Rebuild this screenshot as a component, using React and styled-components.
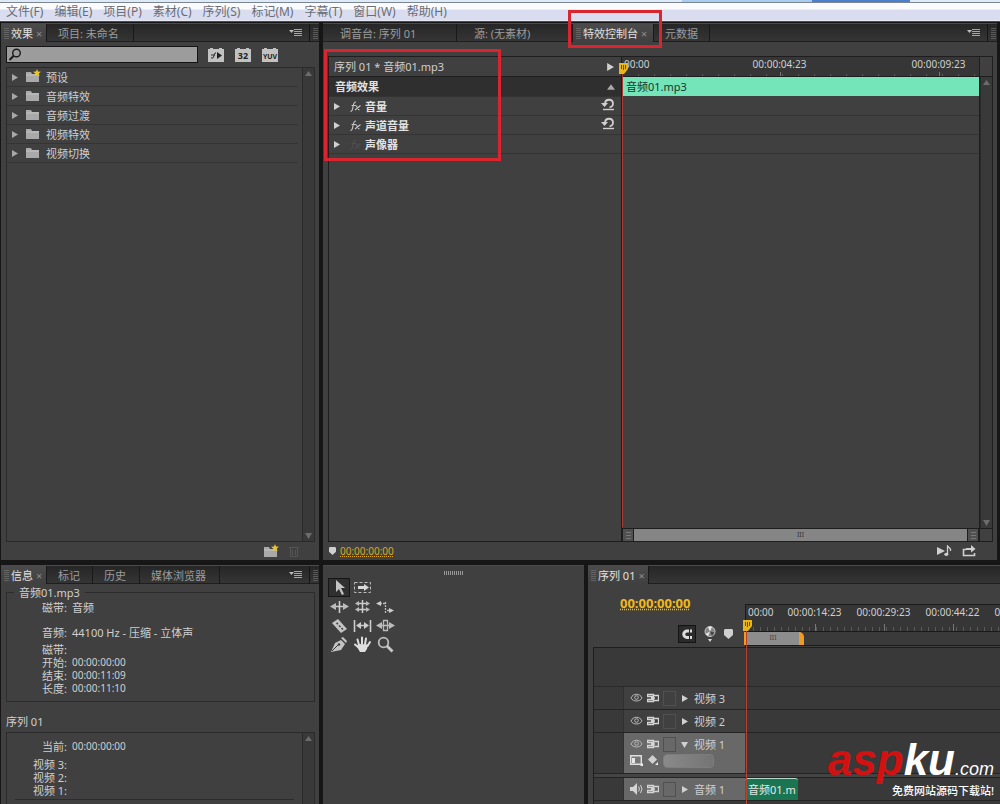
import React, { useState } from 'react';
import styled, { createGlobalStyle, css } from 'styled-components';

const menus = ['文件(F)', '编辑(E)', '项目(P)', '素材(C)', '序列(S)', '标记(M)', '字幕(T)', '窗口(W)', '帮助(H)'];
const folders = ['预设', '音频特效', '音频过渡', '视频特效', '视频切换'];
const effects = [
  { name: '音量', fx: true },
  { name: '声道音量', fx: true },
  { name: '声像器', fx: false },
];
const videoTracks = [{ name: '视频 3' }, { name: '视频 2' }, { name: '视频 1', open: true }];

/* Icons */

const Triangle = ({ dir = 'right', size = 7, color = '#a8a8a8' }) => {
  const points = { right: '1,0 7,3.5 1,7', down: '0,1 7,1 3.5,7', up: '0,6 7,6 3.5,1' };
  return (
    <Svg width={size} height={size} viewBox='0 0 7 7'>
      <polygon points={points[dir]} fill={color} />
    </Svg>
  );
};

const FolderIcon = ({ star }) => (
  <Svg width='16' height='14' viewBox='0 0 16 14'>
    <path d='M1 3h5l1 2h7v8H1z' fill='#a9a9a9' />
    <path d='M1 6h13' stroke='#c4c4c4' />
    {star && <path d='M12 0l1 2.5 3 .3-2.2 1.8.7 2.7L12 5.900l-2.500 1.400.7-2.700L8 2.800l3-.3z' fill='#e9c52b' />}
  </Svg>
);

const MenuIcon = () => (
  <Svg width='14' height='9' viewBox='0 0 14 9'>
    <path d='M0 2h5L2.500 5z' fill='#bdbdbd' />
    <path d='M5 1.500h8M5 3.500h8M5 5.500h8M5 7.500h8' stroke='#a5a5a5' />
  </Svg>
);

const BadgeIcon = ({ kind }) => (
  <Svg width='18' height='14' viewBox='0 0 18 14'>
    <path d='M1 1h2V0h3v1h6V0h3v1h2v13H1z' fill='#c2c2c2' />
    {kind === 'play' ? (
      <>
        <path d='M4 10h2l2-5h1M4 7h4' stroke='#333' fill='none' />
        <polygon points='10,4 15,7.500 10,11' fill='#222' />
      </>
    ) : (
      <BadgeText x='9' y='11' $small={kind === 'YUV'}>
        {kind}
      </BadgeText>
    )}
  </Svg>
);

const SearchIcon = () => (
  <Svg width='14' height='14' viewBox='0 0 14 14' fill='none' stroke='#1c1c1c'>
    <circle cx='8.500' cy='5' r='3.800' strokeWidth='1.400' />
    <path d='M5.700 7.800L1.500 12' strokeWidth='2' />
  </Svg>
);

const FxIcon = ({ dim }) => (
  <Svg width='11' height='11' viewBox='0 0 11 11' fill='none' stroke={dim ? '#4e4e4e' : '#c6c6c6'} strokeWidth='1.100'>
    <path d='M.5 10.500c2 0 2-2 2.500-5s1-4.500 3-4.500M1.500 4.500h4M5.500 4.500c2 0 2 4.500 4 4.500M10.500 4.500L5 9' />
  </Svg>
);

const ResetIcon = () => (
  <Svg width='14' height='13' viewBox='0 0 14 13' fill='none' stroke='#d0d0d0'>
    <path d='M4 5a4 3.800 0 1 1 4.500 4.300' strokeWidth='1.800' />
    <polygon points='0,5 7,5 3.500,9' fill='#d0d0d0' stroke='none' />
    <path d='M2 11.500h11' strokeWidth='1.400' />
  </Svg>
);

const PlayheadIcon = () => (
  <Svg width='9' height='12' viewBox='0 0 9 12'>
    <path d='M0 0h9v6l-4 5H0z' fill='#e9b51f' />
    <path d='M2.500 2v4M4.500 2v5M6.500 2v4' stroke='#6b4d05' />
  </Svg>
);

const MarkerIcon = ({ large }) => (
  <Svg width={large ? 9 : 7} height={large ? 10 : 8} viewBox='0 0 9 10'>
    <path d='M1 0h7l1 1v5L4.500 10 0 6V1z' fill='#cfcfcf' />
  </Svg>
);

const TrashIcon = () => (
  <Svg width='10' height='11' viewBox='0 0 10 11' stroke='#545454' fill='none'>
    <path d='M0 1.500h10M1.500 2v8.500h7V2M3.500 4v5M6.500 4v5' />
  </Svg>
);

const PlayAudioIcon = () => (
  <Svg width='15' height='12' viewBox='0 0 15 12'>
    <polygon points='0,2 8,6 0,10' fill='#cfcfcf' />
    <path d='M10.500 9V1l3 3v2' stroke='#cfcfcf' strokeWidth='1.300' fill='none' />
    <ellipse cx='9.300' cy='9.300' rx='2' ry='1.600' fill='#cfcfcf' />
  </Svg>
);

const ExportIcon = () => (
  <Svg width='15' height='12' viewBox='0 0 15 12'>
    <path d='M4 4.500H1.500v6h11V8' stroke='#cfcfcf' strokeWidth='1.600' fill='none' />
    <path d='M4 5V3h5V0l4.500 4L9 7.500V5z' fill='#cfcfcf' />
  </Svg>
);

const EyeIcon = () => (
  <Svg width='13' height='10' viewBox='0 0 13 10' fill='none' stroke='#b9b9b9'>
    <path d='M1 5c2-5 9-5 11 0-2 4-9 4-11 0z' />
    <circle cx='6.500' cy='4.500' r='1.800' />
  </Svg>
);

const SyncIcon = () => (
  <Svg width='12' height='10' viewBox='0 0 12 10' fill='none' stroke='#d4d4d4'>
    <path d='M.5 1.500h6v2h-6zM.5 6.500h6v2h-6zM7 2.500h4.500v5H7M8 5h-4' strokeWidth='1.300' />
  </Svg>
);

const SpeakerIcon = () => (
  <Svg width='13' height='12' viewBox='0 0 13 12'>
    <path d='M0 4h3l4-4v12L3 8H0z' fill='#d4d4d4' />
    <path d='M8.500 3.500q2 2.500 0 5M10.500 2q3 4 0 8' stroke='#d4d4d4' fill='none' />
  </Svg>
);

const DisplayIcon = () => (
  <Svg width='14' height='12' viewBox='0 0 14 12'>
    <path d='M.7.7h10.600v8.600H.7z' stroke='#e0e0e0' strokeWidth='1.400' fill='#777' />
    <path d='M2 3h3v5H2z' fill='#e8e8e8' />
    <path d='M13 8v3h-3z' fill='#eee' />
  </Svg>
);

const KeyframeIcon = () => (
  <Svg width='11' height='12' viewBox='0 0 11 12'>
    <path d='M4.500 0L9 4.500 4.500 9 0 4.500z' fill='#cfcfcf' />
    <path d='M10 7v3H7z' fill='#eee' />
  </Svg>
);

const MagnetIcon = () => (
  <Svg width='14' height='14' viewBox='0 0 14 14' fill='none' stroke='#dcdcdc'>
    <path d='M12 4H7a3 3 0 0 0 0 6.500h5' strokeWidth='3' />
    <path d='M9.500 2v4M9.500 9v3' stroke='#222' />
  </Svg>
);

const EncoreIcon = () => (
  <Svg width='12' height='16' viewBox='0 0 12 16'>
    <circle cx='6' cy='5.500' r='5' fill='#858585' stroke='#c9c9c9' />
    <path d='M6 5.500L4 1l4-.3zM6 5.500l-2 4.700L1.500 8z' fill='#eee' />
    <path d='M6 5.500l4.500 1L8 10z' fill='#444' />
    <path d='M4 13h4l-2 3z' fill='#d6d6d6' />
  </Svg>
);

// One entry for each button of the tool palette, null leaves the cell empty
const tools = [
  { name: '选择工具', art: <path d='M6 2v12l3-3 3 6 2-1-3-6h4z' fill='#c4c4c4' /> },
  {
    name: '轨道选择工具',
    art: (
      <>
        <path d='M1.500 4.500h16v10h-16z' fill='none' stroke='#bbb' strokeDasharray='3 2' />
        <path d='M5 8h6V6l5 3.500-5 3.500v-2H5z' fill='#d8d8d8' />
      </>
    ),
  },
  null,
  {
    name: '波纹编辑工具',
    art: (
      <>
        <path d='M9.500 4v12M4 9.500h11' stroke='#ccc' strokeWidth='1.600' />
        <path d='M0 9.500L6 6v7zM19 9.500L13 6v7z' fill='#bbb' />
      </>
    ),
  },
  {
    name: '滚动编辑工具',
    art: (
      <>
        <path d='M9.500 3v13M4 6.500h11M4 12.500h11' stroke='#ccc' strokeWidth='1.500' />
        <path d='M2 6.500L6 4v5zM17 6.500L13 4v5zM2 12.500L6 10v5zM17 12.500L13 10v5z' fill='#bbb' />
      </>
    ),
  },
  {
    name: '速率伸缩工具',
    art: (
      <>
        <path d='M4 6.500h5M9.500 5v11M11 13.500h5' stroke='#bbb' strokeDasharray='2 1' strokeWidth='1.300' />
        <path d='M0 6.500L5 4v5zM18 13.500L13 11v5z' fill='#ccc' />
      </>
    ),
  },
  {
    name: '剃刀工具',
    art: (
      <>
        <path d='M2 7l6-4 9 10-6 4z' fill='#c4c4c4' />
        <path d='M6.500 7l1.500 1M9 9.500l1.500 1.500M11.500 12l1.500 1.500' stroke='#444' strokeWidth='1.600' />
      </>
    ),
  },
  {
    name: '错落工具',
    art: (
      <>
        <path d='M1.500 4v12M17.500 4v12M6 9.500h7' stroke='#ccc' strokeWidth='1.600' />
        <path d='M3 9.500L8 6v7zM16 9.500L11 6v7z' fill='#ccc' />
      </>
    ),
  },
  {
    name: '滑动工具',
    art: (
      <>
        <path d='M7.500 4.500h4v10h-4zM3 9.500h13' fill='none' stroke='#bbb' strokeWidth='1.300' />
        <path d='M0 9.500L6 6v7zM19 9.500L13 6v7z' fill='#bbb' />
      </>
    ),
  },
  {
    name: '钢笔工具',
    art: (
      <>
        <path d='M1 17L5 8l6-3 4 4-4 6z' fill='#c4c4c4' />
        <path d='M11 3l2-1 4 4-1 2z' fill='#c4c4c4' />
        <path d='M2 16l6-6' stroke='#3a3a3a' />
        <circle cx='9' cy='9.500' r='1.200' fill='#3a3a3a' />
      </>
    ),
  },
  {
    name: '手形工具',
    art: (
      <>
        <path d='M6 10L4.500 4.500M9 9V2.500M12 9.500l1-6M14.500 11l2.500-4M5 12L2 9.500' stroke='#dedede' strokeWidth='2' strokeLinecap='round' />
        <path d='M5 9l10 .5-1 4.500-2 3H7l-3-5z' fill='#dedede' />
      </>
    ),
  },
  {
    name: '缩放工具',
    art: (
      <>
        <circle cx='7.500' cy='7.500' r='4.800' fill='none' stroke='#bcbcbc' strokeWidth='1.800' />
        <path d='M11 11l5.500 5.500' stroke='#c8c8c8' strokeWidth='2.800' />
      </>
    ),
  },
];

/* Shared parts */

const PanelTab = ({ label, active, width, indent = 11 }) => (
  <Tab $active={active} $width={width}>
    {active && <Grip />}
    <TabButton $active={active} $indent={active ? 2 : indent}>
      {label}
    </TabButton>
    {active && <CloseButton aria-label='关闭'>×</CloseButton>}
  </Tab>
);

const PanelMenu = () => (
  <>
    <PanelMenuButton aria-label='面板菜单'>
      <MenuIcon />
    </PanelMenuButton>
    <TabEnd>
      <Grip />
    </TabEnd>
  </>
);

const ScrollBar = () => (
  <ScrollColumn>
    <Triangle dir='up' color='#6c6c6c' />
    <Triangle dir='down' color='#6c6c6c' />
  </ScrollColumn>
);

const TrackRow = ({ name, open, audio, children }) => (
  <Track $tall={open} $audio={audio}>
    <TrackGutter />
    <TrackHead $lit={open || audio}>
      <TrackControls>
        <TrackSwitch aria-label='切换轨道输出'>{audio ? <SpeakerIcon /> : <EyeIcon />}</TrackSwitch>
        <TrackSwitch aria-label='同步锁定'>
          <SyncIcon />
        </TrackSwitch>
        <TrackSwitch aria-label='锁定轨道' $boxed />
        <TrackName>
          <Triangle dir={open ? 'down' : 'right'} color='#d0d0d0' />
          {name}
        </TrackName>
      </TrackControls>
      {open && (
        <TrackOptions>
          <DisplayIcon />
          <KeyframeIcon />
          <KeyframeNav />
        </TrackOptions>
      )}
    </TrackHead>
    <TrackLane>{children}</TrackLane>
  </Track>
);

const App = () => {
  const [search, setSearch] = useState('');
  const [tool, setTool] = useState(0);

  return (
    <Shell>
      <GlobalStyle />
      <MenuBar>
        {menus.map((item) => (
          <MenuItem key={item}>{item}</MenuItem>
        ))}
      </MenuBar>

      <Workspace>
        <TopRow>
          {/* Effects browser */}
          <Panel>
            <TabBar>
              <PanelTab label='效果' active width={46} />
              <PanelTab label='项目: 未命名' width={87} />
              <PanelMenu />
            </TabBar>
            <SearchRow>
              <SearchBox>
                <SearchIcon />
                <input aria-label='搜索效果' value={search} onChange={(e) => setSearch(e.target.value)} />
              </SearchBox>
              {['play', '32', 'YUV'].map((kind) => (
                <IconButton key={kind} aria-label={kind}>
                  <BadgeIcon kind={kind} />
                </IconButton>
              ))}
            </SearchRow>
            <TreeBox>
              <TreeList>
                {folders.map((name, index) => (
                  <TreeRow key={name}>
                    <Triangle />
                    <FolderIcon star={index === 0} />
                    {name}
                  </TreeRow>
                ))}
              </TreeList>
              <ScrollBar />
            </TreeBox>
            <PanelFooter $end={20}>
              <IconButton aria-label='新建文件夹'>
                <FolderIcon star />
              </IconButton>
              <IconButton aria-label='删除'>
                <TrashIcon />
              </IconButton>
            </PanelFooter>
          </Panel>

          {/* Effect controls */}
          <Panel>
            <TabBar>
              <PanelTab label='调音台: 序列 01' width={134} indent={17} />
              <PanelTab label='源: (无素材)' width={116} indent={17} />
              <PanelTab label='特效控制台' active width={81} />
              <PanelTab label='元数据' width={56} />
              <PanelMenu />
              <TabOutline />
            </TabBar>
            <ControlsBox>
              <EffectList>
                <EffectTitle>
                  序列 01 * 音频01.mp3
                  <Triangle color='#d0d0d0' size={8} />
                </EffectTitle>
                <EffectGroup>
                  音频效果
                  <Triangle dir='up' size={8} />
                </EffectGroup>
                {effects.map((item) => (
                  <EffectRow key={item.name}>
                    <Triangle color='#d0d0d0' />
                    <FxIcon dim={!item.fx} />
                    <span>{item.name}</span>
                    {item.fx && (
                      <IconButton aria-label='重置'>
                        <ResetIcon />
                      </IconButton>
                    )}
                  </EffectRow>
                ))}
              </EffectList>
              <EffectTimeline>
                <EffectRuler>
                  <span>00:00</span>
                  <span>00:00:04:23</span>
                  <span>00:00:09:23</span>
                </EffectRuler>
                <EffectClip>音频01.mp3</EffectClip>
                {effects.map((item) => (
                  <EffectLane key={item.name} />
                ))}
                <EffectPlayhead>
                  <PlayheadIcon />
                </EffectPlayhead>
                <ZoomBar>
                  <ZoomHandle />
                  <ZoomThumb>III</ZoomThumb>
                  <ZoomHandle />
                </ZoomBar>
              </EffectTimeline>
              <EffectScroll>
                <ScrollBar />
              </EffectScroll>
              <ListOutline />
            </ControlsBox>
            <PanelFooter $start={6} $end={20}>
              <MarkerIcon />
              <Timecode>00:00:00:00</Timecode>
              <IconButton aria-label='仅播放音频'>
                <PlayAudioIcon />
              </IconButton>
              <IconButton aria-label='导出'>
                <ExportIcon />
              </IconButton>
            </PanelFooter>
          </Panel>
        </TopRow>

        <BottomRow>
          {/* Clip info */}
          <Panel>
            <TabBar>
              <PanelTab label='信息' active width={46} />
              <PanelTab label='标记' width={46} />
              <PanelTab label='历史' width={47} />
              <PanelTab label='媒体浏览器' width={80} />
              <PanelMenu />
            </TabBar>
            <ClipInfo>
              <legend>音频01.mp3</legend>
              <InfoList>
                <dt>磁带:</dt>
                <dd>音频</dd>
              </InfoList>
              <InfoList>
                <dt>音频:</dt>
                <dd>44100 Hz - 压缩 - 立体声</dd>
              </InfoList>
              <InfoList>
                <dt>磁带:</dt>
                <dd />
                <dt>开始:</dt>
                <Time>00:00:00:00</Time>
                <dt>结束:</dt>
                <Time>00:00:11:09</Time>
                <dt>长度:</dt>
                <Time>00:00:11:10</Time>
              </InfoList>
            </ClipInfo>
            <SequenceName>序列 01</SequenceName>
            <SequenceInfo>
              <SequenceList>
                <InfoList>
                  <dt>当前:</dt>
                  <Time>00:00:00:00</Time>
                </InfoList>
                <InfoList>
                  <dt>视频 3:</dt>
                  <dd />
                  <dt>视频 2:</dt>
                  <dd />
                  <dt>视频 1:</dt>
                  <dd />
                </InfoList>
              </SequenceList>
              <SequenceScroll>
                <Triangle dir='up' color='#6c6c6c' />
              </SequenceScroll>
            </SequenceInfo>
          </Panel>

          {/* Tool palette */}
          <Panel>
            <ToolGrip />
            <ToolGrid>
              {tools.map((item, index) =>
                item ? (
                  <ToolButton key={item.name} aria-label={item.name} $active={tool === index} onClick={() => setTool(index)}>
                    <Svg width='19' height='19' viewBox='0 0 19 19'>
                      {item.art}
                    </Svg>
                  </ToolButton>
                ) : (
                  <span key={index} />
                )
              )}
            </ToolGrid>
          </Panel>

          {/* Sequence timeline */}
          <Panel>
            <TabBar>
              <PanelTab label='序列 01' active width={61} />
            </TabBar>
            <TimelineHead>
              <TimelineTools>
                <BigTimecode>00:00:00:00</BigTimecode>
                <TimelineButtons>
                  <SnapButton aria-label='吸附'>
                    <MagnetIcon />
                  </SnapButton>
                  <IconButton aria-label='Encore 章节标记'>
                    <EncoreIcon />
                  </IconButton>
                  <IconButton aria-label='标记'>
                    <MarkerIcon large />
                  </IconButton>
                </TimelineButtons>
              </TimelineTools>
              <TimelineRuler>
                <RulerLabels>
                  <span>00:00</span>
                  <span>00:00:14:23</span>
                  <span>00:00:29:23</span>
                  <span>00:00:44:22</span>
                  <span>00:00:59:22</span>
                </RulerLabels>
                <WorkBar>
                  <WorkArea>III</WorkArea>
                </WorkBar>
                <TimelinePlayhead>
                  <PlayheadIcon />
                </TimelinePlayhead>
              </TimelineRuler>
            </TimelineHead>
            <Tracks>
              <TrackSpace />
              {videoTracks.map((track) => (
                <TrackRow key={track.name} {...track} />
              ))}
              <TrackSplit />
              <TrackRow name='音频 1' audio>
                <AudioClip>音频01.m</AudioClip>
              </TrackRow>
            </Tracks>
          </Panel>
        </BottomRow>
      </Workspace>

      <Watermark>
        <Brand>
          <b>asp</b>
          <strong>ku</strong>
          <em>.com</em>
        </Brand>
        <Slogan>免费网站源码下载站!</Slogan>
      </Watermark>
    </Shell>
  );
};

const GlobalStyle = createGlobalStyle`
  * {
    box-sizing: border-box;
  }

  body {
    margin: 0;
    background: #161616;
    color: #cfcfcf;
    font: 11px/13px 'Noto Sans', 'Noto Sans CJK SC', sans-serif;
  }

  button {
    padding: 0;
    border: 0;
    background: none;
    color: inherit;
    font: inherit;
    white-space: nowrap;
  }
`;

const Svg = styled.svg`
  display: block;
  flex: none;
`;

const BadgeText = styled.text`
  fill: #222;
  font: bold 9px 'Noto Sans', sans-serif;
  font-size: ${({ $small }) => ($small ? '7px' : '9px')};
  text-anchor: middle;
`;

const Shell = styled.div`
  position: relative;
  display: flex;
  flex-direction: column;
  height: 100vh;
  overflow: hidden;
`;

/* Menu bar */

const MenuBar = styled.nav`
  display: flex;
  flex: none;
  gap: 11px;
  height: 22px;
  padding: 3px 6px 0;
  border-bottom: 1px solid #4a4d55;
  background:
    linear-gradient(#a9cdf0, #a9cdf0) 682px 0 / 130px 2px no-repeat,
    linear-gradient(#4a7fd0, #4a7fd0) 812px 0 / 98px 2px no-repeat,
    linear-gradient(#dcebf7 0 2px, #7d8590 2px 3px, #fafbfd 3px 9px, #d9ddef 10px 20px, #f4f5fa 21px);
  color: #6a6d76;
  font-size: 12px;
  line-height: 18px;
`;

const MenuItem = styled.button`
  display: block;
`;

/* Panels */

const Workspace = styled.main`
  display: flex;
  flex-direction: column;
  flex: 1;
  gap: 5px;
  min-height: 0;
  padding: 1px 0 0 1px;
`;

const TopRow = styled.div`
  display: grid;
  grid-template-columns: 318px minmax(0, 1fr);
  flex: 1;
  gap: 4px;
  min-height: 0;
  padding-right: 3px;
`;

const BottomRow = styled.div`
  display: grid;
  grid-template-columns: 318px 261px minmax(0, 1fr);
  flex: 0 0 239px;
  column-gap: 4px;
  min-height: 0;
`;

const Panel = styled.section`
  display: flex;
  flex-direction: column;
  min-width: 0;
  min-height: 0;
  background: #404040;
  border-top: 1px solid #4a4a4a;
`;

const TabBar = styled.div`
  position: relative;
  display: flex;
  flex: none;
  height: 18px;
  background: linear-gradient(#262626, #363636);
  box-shadow: inset 0 -1px #1e1e1e;
`;

const Tab = styled.div`
  display: flex;
  align-items: center;
  flex: none;
  width: ${({ $width }) => $width}px;
  border-right: 1px solid #191919;
  overflow: hidden;
  ${({ $active }) =>
    $active &&
    css`
      padding-left: 3px;
      background: linear-gradient(#4b4b4b, #404040);
    `}
`;

const TabButton = styled.button`
  padding-left: ${({ $indent }) => $indent}px;
  color: ${({ $active }) => ($active ? '#e0e0e0' : '#9c9c9c')};
`;

const CloseButton = styled.button`
  padding-left: 3px;
  color: #8d8d8d;
`;

const Grip = styled.i`
  flex: none;
  width: 5px;
  height: 11px;
  background: repeating-linear-gradient(#777 0 1px, transparent 1px 2px);
  opacity: 0.6;
`;

const PanelMenuButton = styled.button`
  margin: 0 6px 2px auto;
`;

const TabEnd = styled.div`
  display: flex;
  align-items: center;
  width: 10px;
  padding-left: 3px;
  border-left: 1px solid #151515;
`;

const IconButton = styled.button`
  flex: none;
`;

const PanelFooter = styled.footer`
  display: flex;
  align-items: center;
  justify-content: flex-end;
  flex: none;
  gap: 10px;
  height: 18px;
  padding: 0 ${({ $end }) => $end}px 0 ${({ $start = 0 }) => $start}px;
`;

const ScrollColumn = styled.div`
  display: flex;
  flex-direction: column;
  align-items: center;
  justify-content: space-between;
  flex: none;
  width: 12px;
  padding: 2px 0;
  border-left: 1px solid #2a2a2a;
  background: #393939;
`;

/* Effects browser */

const SearchRow = styled.div`
  display: flex;
  align-items: center;
  flex: none;
  gap: 9px;
  height: 25px;
  padding-left: 5px;
`;

const SearchBox = styled.label`
  display: flex;
  align-items: center;
  width: 192px;
  height: 17px;
  padding-left: 1px;
  border: 1px solid #141414;
  background: #9c9c9c;

  input {
    flex: 1;
    min-width: 0;
    padding: 0 2px;
    border: 0;
    outline: 0;
    background: transparent;
    font: inherit;
  }
`;

const TreeBox = styled.div`
  display: flex;
  flex: 1;
  min-height: 0;
  margin: 0 4px 0 5px;
  border: 1px solid #2a2a2a;
`;

const TreeList = styled.div`
  flex: 1;
  padding-right: 4px;
`;

const TreeRow = styled.button`
  display: flex;
  align-items: center;
  width: 100%;
  height: 19px;
  padding-left: 4px;
  border-bottom: 1px solid #343434;

  ${Svg} + ${Svg} {
    margin: 0 5px 2px 7px;
  }
`;

/* Effect controls */

const ControlsBox = styled.div`
  position: relative;
  display: grid;
  grid-template-columns: 293px minmax(0, 1fr) 12px;
  flex: 1;
  min-height: 0;
  margin: 14px 4px 0 5px;
  border: 1px solid #1e1e1e;
`;

const EffectList = styled.div`
  border-right: 1px solid #1e1e1e;
`;

const EffectTitle = styled.div`
  display: flex;
  align-items: center;
  justify-content: space-between;
  height: 20px;
  padding: 0 7px 0 5px;
  border-bottom: 1px solid #1e1e1e;
`;

const EffectGroup = styled(EffectTitle)`
  padding: 0 6px;
  border-color: #333;
  background: #2f2f2f;
  color: #e2e2e2;
  font-weight: bold;
`;

const EffectRow = styled.div`
  display: flex;
  align-items: center;
  height: 19px;
  padding: 0 6px 0 4px;
  border-bottom: 1px solid #343434;
  color: #e2e2e2;
  font-weight: bold;

  ${Svg} + ${Svg} {
    margin: 0 4px 0 10px;
  }

  ${IconButton} {
    margin: 0 0 4px auto;
  }
`;

const EffectTimeline = styled.div`
  position: relative;
  display: flex;
  flex-direction: column;
  border-right: 1px solid #1e1e1e;
`;

const EffectRuler = styled.div`
  display: flex;
  height: 20px;
  overflow: hidden;
  border-bottom: 1px solid #1e1e1e;
  background:
    repeating-linear-gradient(90deg, #777 0 1px, transparent 1px 159px) -1px 15px / 100% 4px no-repeat,
    repeating-linear-gradient(90deg, #5c5c5c 0 1px, transparent 1px 16px) 0 17px / 100% 2px no-repeat,
    #363636;
  font-size: 10px;
  line-height: 14px;
  white-space: nowrap;

  span {
    flex: 0 0 159px;
    text-align: center;
  }

  span:first-child {
    flex-basis: 78px;
    padding-left: 2px;
    text-align: left;
  }
`;

const EffectClip = styled.div`
  height: 19px;
  padding-left: 4px;
  margin-bottom: 1px;
  background: #74e4b9;
  color: #17382c;
  line-height: 19px;
`;

const EffectLane = styled.div`
  height: 19px;
  border-bottom: 1px solid #343434;
`;

const EffectPlayhead = styled.div`
  position: absolute;
  top: 6px;
  bottom: 14px;
  left: 0;
  border-left: 1px solid #b03a32;

  ${Svg} {
    margin-left: -4px;
  }
`;

const ZoomBar = styled.div`
  display: flex;
  height: 13px;
  margin-top: auto;
  border-top: 1px solid #1e1e1e;
`;

const ZoomHandle = styled.div`
  width: 12px;
  border: solid #1e1e1e;
  border-width: 0 1px;
  background: repeating-linear-gradient(#777 0 1px, transparent 1px 3px) 3px 3px / 5px 7px no-repeat #505050;
`;

const ZoomThumb = styled.div`
  flex: 1;
  background: #858585;
  color: #333;
  font-size: 7px;
  line-height: 12px;
  text-align: center;
`;

const EffectScroll = styled.div`
  display: flex;
  margin: 19px 0 12px;
  border: solid #1e1e1e;
  border-width: 1px 0;
`;

const Timecode = styled.button`
  margin: 0 auto 0 -6px;
  color: #dfa520;
  font-size: 10px;
  text-decoration: underline dotted;
`;

/* Red call-outs over the tab and the effect list */

const outline = css`
  position: absolute;
  border: 3px solid #d9252f;
  pointer-events: none;
`;

const TabOutline = styled.div`
  ${outline}
  top: -14px;
  left: 245px;
  width: 94px;
  height: 38px;
  z-index: 1;
`;

const ListOutline = styled.div`
  ${outline}
  top: -8px;
  left: -5px;
  width: 177px;
  height: 112px;
`;

/* Clip info */

const ClipInfo = styled.fieldset`
  flex: none;
  height: 116px;
  min-width: 0;
  margin: 2px 4px 0 5px;
  padding: 2px 0 0;
  border: 1px solid #2c2c2c;

  legend {
    margin-left: 7px;
    padding: 0 5px;
  }
`;

const InfoList = styled.dl`
  display: grid;
  grid-template-columns: 60px 1fr;
  grid-auto-rows: 13px;
  column-gap: 5px;
  margin: 0;

  dt {
    text-align: right;
  }

  dd {
    margin: 0;
  }

  & + & {
    margin-top: 4px;
  }

  &:nth-of-type(2) {
    margin-top: 12px;
  }
`;

const Time = styled.dd`
  font-size: 10px;
`;

const SequenceName = styled.h2`
  margin: 13px 5px 4px;
  font-size: 11px;
  font-weight: normal;
`;

const SequenceInfo = styled.div`
  display: flex;
  flex: 1;
  min-height: 0;
  margin: 0 4px 0 5px;
  border: 1px solid #2a2a2a;
  border-bottom: 0;
`;

const SequenceList = styled.div`
  flex: 1;
  padding-top: 7px;

  ${InfoList} + ${InfoList} {
    margin: 5px 8px 0;
    padding-bottom: 2px;
    border-bottom: 1px solid #2c2c2c;
    grid-template-columns: 52px 1fr;
  }
`;

const SequenceScroll = styled(ScrollColumn)`
  justify-content: flex-start;
`;

/* Tool palette */

const ToolGrip = styled.i`
  flex: none;
  align-self: center;
  width: 20px;
  height: 4px;
  margin-top: 5px;
  background: repeating-linear-gradient(90deg, #999 0 1px, transparent 1px 2px);
`;

const ToolGrid = styled.div`
  display: grid;
  grid-template-columns: repeat(3, 22px);
  grid-auto-rows: 19px;
  column-gap: 1px;
  padding: 3px 0 0 5px;
`;

const ToolButton = styled.button`
  display: flex;
  align-items: center;
  justify-content: center;
  border: 1px solid ${({ $active }) => ($active ? '#161616' : 'transparent')};
  background: ${({ $active }) => ($active ? '#303030' : 'none')};
`;

/* Sequence timeline */

const TimelineHead = styled.div`
  display: flex;
  flex: none;
  height: 63px;
  padding-top: 11px;
`;

const TimelineTools = styled.div`
  flex: 0 0 157px;
`;

const BigTimecode = styled.button`
  display: block;
  margin-left: 32px;
  color: #f2b91d;
  font-size: 13px;
  font-weight: bold;
  line-height: 16px;
  text-decoration: underline dotted;
`;

const TimelineButtons = styled.div`
  display: flex;
  align-items: center;
  gap: 8px;
  margin: 14px 0 0 90px;
`;

const SnapButton = styled(IconButton)`
  padding: 1px;
  border: 1px solid #141414;
  background: #2b2b2b;
`;

const TimelineRuler = styled.div`
  position: relative;
  flex: 1;
  min-width: 0;
  margin-top: 9px;
  border: solid #1a1a1a;
  border-width: 1px 0 0 1px;
`;

const RulerLabels = styled.div`
  display: flex;
  height: 26px;
  overflow: hidden;
  background:
    repeating-linear-gradient(90deg, #777 0 1px, transparent 1px 69px) 0 19px / 100% 7px no-repeat,
    repeating-linear-gradient(90deg, #5a5a5a 0 1px, transparent 1px 7px) 0 22px / 100% 4px no-repeat,
    #363636;
  font-size: 10px;
  line-height: 14px;
  white-space: nowrap;

  span {
    flex: 0 0 69px;
    text-align: center;
  }

  span:first-child {
    flex-basis: 34px;
    padding-left: 2px;
    text-align: left;
  }
`;

const WorkBar = styled.div`
  height: 15px;
  border: solid #1a1a1a;
  border-width: 1px 0;
  background: #3a3a3a;
`;

const WorkArea = styled.div`
  width: 60px;
  height: 13px;
  margin-left: -2px;
  border: solid #ef9a22;
  border-width: 0 5px 0 3px;
  border-top-right-radius: 5px;
  background: #8d8d8d;
  color: #444;
  font-size: 7px;
  line-height: 12px;
  text-align: center;
`;

const TimelinePlayhead = styled.div`
  position: absolute;
  top: 15px;
  left: 0;
  height: 220px;
  border-left: 1px solid #b8402f;

  ${Svg} {
    margin-left: -4px;
  }
`;

const Tracks = styled.div`
  flex: 1;
  min-height: 0;
  margin-left: 5px;
  overflow: hidden;
  border: solid #1e1e1e;
  border-width: 1px 0 0 1px;
  background: #393939;
`;

const TrackSpace = styled.div`
  height: 39px;
  border-bottom: 1px solid #2a2a2a;
`;

const Track = styled.div`
  display: flex;
  height: ${({ $tall }) => ($tall ? '41px' : '23px')};
  border-bottom: 1px solid #242424;
`;

const TrackGutter = styled.div`
  flex: 0 0 30px;
  border-right: 1px solid #303030;
`;

const TrackHead = styled.div`
  flex: 0 0 121px;
  background: ${({ $lit }) => ($lit ? '#686868' : '#404040')};
`;

const TrackControls = styled.div`
  display: flex;
  align-items: center;
  gap: 4px;
  height: 22px;
  padding-left: 5px;
`;

const TrackSwitch = styled.button`
  display: grid;
  place-items: center;
  width: 13px;
  height: 15px;
  border: 1px solid ${({ $boxed }) => ($boxed ? '#505050' : 'transparent')};
`;

const TrackName = styled.button`
  display: flex;
  align-items: center;
  gap: 6px;
  padding-left: 1px;
`;

const TrackOptions = styled.div`
  display: flex;
  gap: 4px;
  padding-left: 6px;
`;

const KeyframeNav = styled.div`
  width: 51px;
  height: 14px;
  margin-top: -1px;
  border: 1px solid #7d7d7d;
  border-radius: 4px;
  background: linear-gradient(90deg, #8a8a8a, #747474);
`;

const TrackLane = styled.div`
  flex: 1;
  min-width: 0;
`;

const TrackSplit = styled.div`
  height: 4px;
  border-bottom: 1px solid #242424;
  background: #444;
`;

const AudioClip = styled.div`
  width: 53px;
  height: 22px;
  padding-left: 3px;
  overflow: hidden;
  border-top: 1px solid #b5d8c8;
  border-radius: 3px 3px 0 0;
  background: #197552;
  color: #e8e8e8;
  line-height: 22px;
  white-space: nowrap;
`;

/* Watermark */

const Watermark = styled.div`
  position: absolute;
  right: 6px;
  bottom: 5px;
  color: #fff;
  text-align: right;
`;

const Brand = styled.div`
  font-family: 'Liberation Sans', sans-serif;
  font-size: 44px;
  font-style: italic;
  line-height: 48px;

  b {
    color: #d31111;
  }

  em {
    font-size: 18px;
  }
`;

const Slogan = styled.div`
  margin-top: -10px;
  font-weight: 500;
  line-height: 16px;
`;

export default App;
